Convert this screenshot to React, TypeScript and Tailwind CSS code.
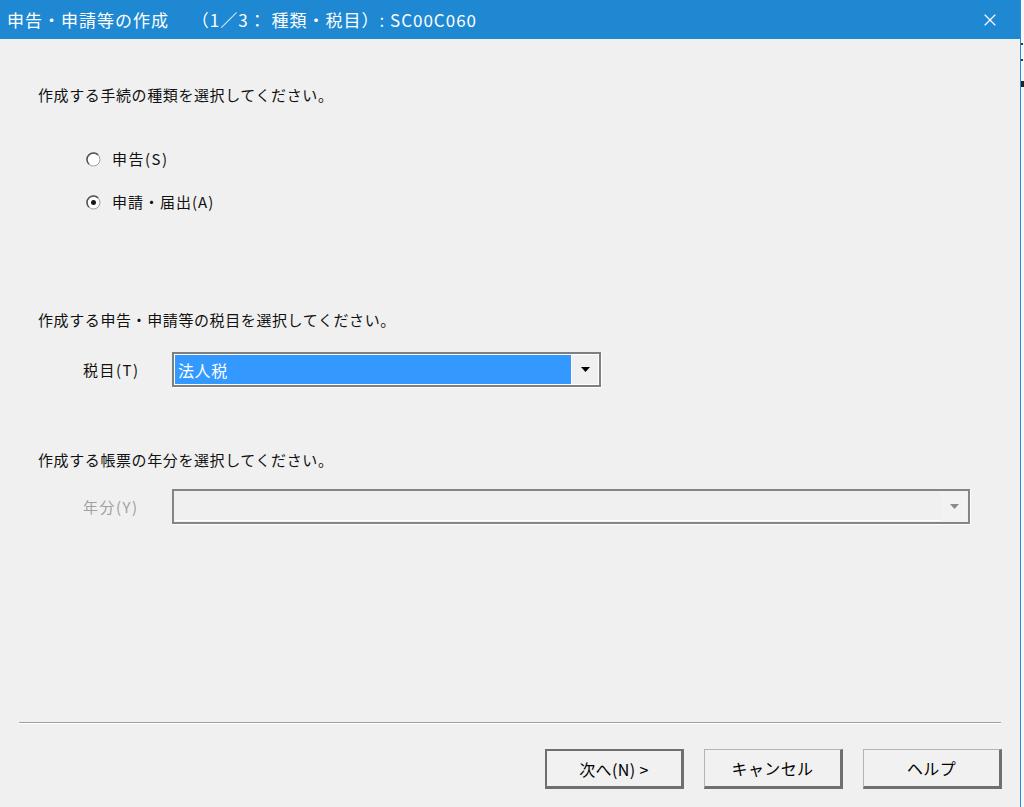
import {X} from "lucide-react";

const font = {fontFamily: '"Noto Sans CJK JP", "Noto Sans", sans-serif'};

function Radio({checked}: {checked?: boolean}) {
  return (
    <svg width="15" height="15" viewBox="0 0 15 15" className="shrink-0">
      <circle cx="7.5" cy="7.5" r="6.5" fill="#ffffff" stroke="#a0a0a0" strokeWidth="1" />
      <path d="M2.9 12.1 A6.5 6.5 0 0 1 12.1 2.9" fill="none" stroke="#555555" strokeWidth="1.5" />
      {checked && <circle cx="7.5" cy="7.5" r="2.5" fill="#1a1a1a" />}
    </svg>
  );
}

function Triangle({color}: {color: string}) {
  return (
    <svg width="9" height="5" viewBox="0 0 9 5">
      <path d="M0 0 H9 L4.5 5 Z" fill={color} />
    </svg>
  );
}

function Button({label, primary}: {label: string; primary?: boolean}) {
  return (
    <button
      className={`flex h-[40px] w-[139px] items-center justify-center bg-[#f1f1f1] text-[16px] tracking-[0.4px] text-black ${
        primary
          ? "border-2 border-[#6f6f6f] border-b-[3px] border-r-[3px]"
          : "border border-[#b4b4b4] border-b-[3px] border-r-[3px] border-b-[#6f6f6f] border-r-[#6f6f6f]"
      }`}
    >
      {label}
    </button>
  );
}

export default function App() {
  return (
    <div className="flex h-[807px] w-[1024px] overflow-hidden bg-[#f7f7f7]" style={font}>
      <div className="flex w-[1021px] flex-col border-r border-[#2b8bd6] bg-[#f0f0f0]">
        <div className="flex h-[39px] shrink-0 items-center justify-between bg-[#1e88d2] pl-[7px] pr-[20px] text-white">
          <span className="whitespace-pre text-[17px] tracking-[1px]">
            申告・申請等の作成　 （1／3： 種類・税目）: SC00C060
          </span>
          <X size={20} strokeWidth={1.4} />
        </div>

        <div className="flex flex-1 flex-col px-[38px] text-[15px] leading-[20px] tracking-[0.6px] text-[#111]">
          <p className="mt-[46px]">作成する手続の種類を選択してください。</p>

          <div className="ml-[48px] mt-[44px] flex flex-col gap-[23px]">
            <label className="flex items-center gap-[11px]">
              <Radio />
              <span className="tracking-[1.5px]">申告(S)</span>
            </label>
            <label className="flex items-center gap-[11px]">
              <Radio checked />
              <span className="tracking-[1px]">申請・届出(A)</span>
            </label>
          </div>

          <p className="mt-[98px]">作成する申告・申請等の税目を選択してください。</p>

          <div className="mt-[22px] flex items-center">
            <span className="ml-[45px] w-[89px] tracking-[1.5px]">税目(T)</span>
            <div className="flex h-[35px] w-[429px] border-2 border-[#7f7f7f] bg-white p-[1px] shadow-[1px_1px_0_#ffffff]">
              <div className="flex flex-1 items-center bg-[#3399ff] pl-[3px] text-[16px] text-white">
                法人税
              </div>
              <div className="ml-[1px] flex w-[26px] items-center justify-center bg-[#f0f0f0]">
                <Triangle color="#000000" />
              </div>
            </div>
          </div>

          <p className="mt-[63px]">作成する帳票の年分を選択してください。</p>

          <div className="mt-[19px] flex items-center">
            <span className="ml-[45px] w-[89px] tracking-[1.5px] text-[#a0a0a0]">年分(Y)</span>
            <div className="flex h-[35px] w-[798px] border-2 border-[#858585] bg-[#f0f0f0] p-[1px] shadow-[1px_1px_0_#ffffff]">
              <div className="flex-1 border-b border-white" />
              <div className="flex w-[26px] items-center justify-center bg-[#f2f2f2]">
                <Triangle color="#8a8a8a" />
              </div>
            </div>
          </div>

          <div className="flex-1" />

          <div className="-mx-[19px] h-[2px] border-t border-b border-t-[#a0a0a0] border-b-white" />

          <div className="-mr-[20px] mb-[18px] mt-[25px] flex justify-end gap-[20px]">
            <Button label="次へ(N) >" primary />
            <Button label="キャンセル" />
            <Button label="ヘルプ" />
          </div>
        </div>
      </div>
      <div className="flex flex-1 flex-col">
        <div className="h-[43px]" />
        <div className="h-[2px] w-[2px] bg-[#333]" />
        <div className="h-[14px]" />
        <div className="h-[2px] w-[2px] bg-[#333]" />
        <div className="h-[20px]" />
        <div className="h-[6px] w-[3px] bg-[#222]" />
      </div>
    </div>
  );
}
